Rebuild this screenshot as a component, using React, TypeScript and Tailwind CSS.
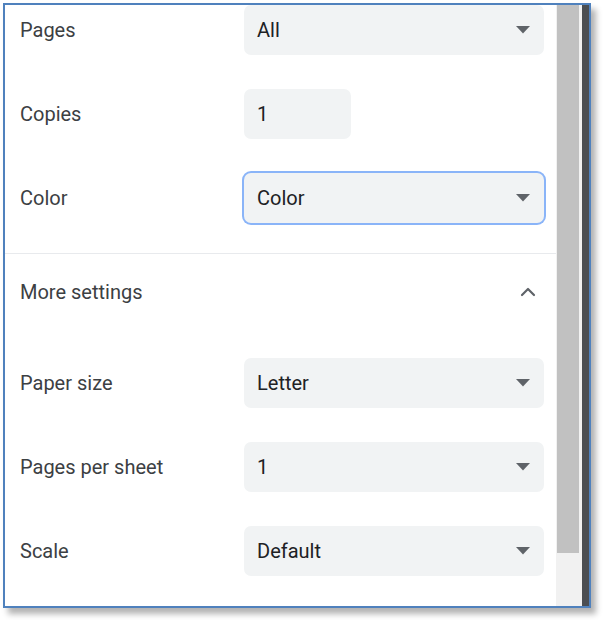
import { ChevronUp } from "lucide-react";

type RowProps = { label: string; value: string; width?: string; arrow?: boolean; focused?: boolean };

function Row({ label, value, width = "w-[300px]", arrow = true, focused = false }: RowProps) {
  return (
    <div className="flex items-center h-[50px] px-[15px]">
      <div className="w-[224px] shrink-0 text-[#3c4043]">{label}</div>
      <div
        className={`${width} shrink-0 h-[50px] rounded-[7px] bg-[#f1f3f4] flex items-center justify-between pl-[13px] pr-[14px] text-[#202124] ${
          focused ? "ring-2 ring-[#8ab4f8]" : ""
        }`}
      >
        <span>{value}</span>
        {arrow && (
          <svg width="14" height="8" viewBox="0 0 14 8">
            <path d="M0 0 L14 0 L7 7.5 Z" fill="#5f6368" />
          </svg>
        )}
      </div>
    </div>
  );
}

export default function App() {
  return (
    <div className="w-[603px] h-[620px] bg-white pt-[3px] pl-[3px]" style={{ fontFamily: "Roboto, 'Noto Sans', sans-serif" }}>
      <div className="w-[588px] h-[605px] border-2 border-[#4f81bd] flex shadow-[5px_6px_6px_rgba(0,0,0,0.3)] text-[20px]">
        {/* Settings panel */}
        <div className="flex-1 bg-white overflow-hidden flex flex-col">
          <Row label="Pages" value="All" />
          <div className="mt-[34px]">
            <Row label="Copies" value="1" width="w-[107px]" arrow={false} />
          </div>
          <div className="mt-[34px]">
            <Row label="Color" value="Color" focused />
          </div>
          <div className="mt-[30px] h-px bg-[#e8eaed]" />
          <div className="h-[76px] flex items-center justify-between pl-[15px] pr-[16px] text-[#3c4043]">
            <span>More settings</span>
            <ChevronUp size={24} strokeWidth={2.2} className="text-[#5f6368]" />
          </div>
          <div className="mt-[28px]">
            <Row label="Paper size" value="Letter" />
          </div>
          <div className="mt-[34px]">
            <Row label="Pages per sheet" value="1" />
          </div>
          <div className="mt-[34px]">
            <Row label="Scale" value="Default" />
          </div>
        </div>
        {/* Scrollbar */}
        <div className="w-[26px] bg-[#f1f1f1] flex flex-col">
          <div className="h-[548px] ml-[1px] mr-[3px] bg-[#c1c1c1]" />
        </div>
        <div className="w-[7px] bg-[#4b4e52]" />
      </div>
    </div>
  );
}
